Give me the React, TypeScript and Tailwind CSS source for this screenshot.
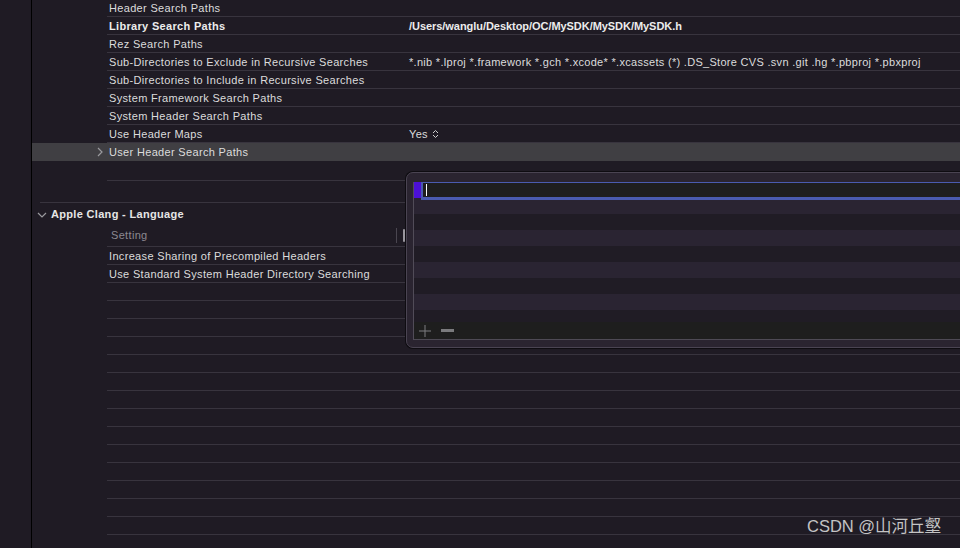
import React from "react";

const ChevronRight = () => (
  <svg width="8" height="10" viewBox="0 0 8 10" className="block">
    <path d="M2 1 L6 5 L2 9" fill="none" stroke="#9a9a9e" strokeWidth="1.2" />
  </svg>
);

const ChevronDown = () => (
  <svg width="10" height="8" viewBox="0 0 10 8" className="block">
    <path d="M1 2 L5 6 L9 2" fill="none" stroke="#9a9a9e" strokeWidth="1.2" />
  </svg>
);

const UpDown = () => (
  <svg width="7" height="10" viewBox="0 0 7 10" className="block">
    <path d="M1 4 L3.5 1.5 L6 4 M1 6 L3.5 8.5 L6 6" fill="none" stroke="#cfcfcf" strokeWidth="1" />
  </svg>
);

type RowProps = {
  label?: string;
  value?: React.ReactNode;
  bold?: boolean;
  selected?: boolean;
  noBorder?: boolean;
  h?: string;
};

const Row = ({ label, value, bold, selected, noBorder, h = "h-[18px]" }: RowProps) => (
  <div className={`flex shrink-0 ${h} ${selected ? "bg-[#403f43]" : ""}`}>
    <div className="w-[75px] shrink-0 flex items-center justify-end pr-[3px]">
      {selected ? <ChevronRight /> : null}
    </div>
    <div
      className={`flex-1 flex items-center pt-px ${noBorder ? "" : "border-b border-[#38343e]"} ${
        bold ? "font-bold text-[#ececec]" : "text-[#dcdcdc]"
      }`}
    >
      <div className={`w-[302px] shrink-0 pl-[2px] whitespace-nowrap ${bold ? "tracking-[0.32px]" : "tracking-[0.33px]"}`}>
        {label}
      </div>
      <div className={`whitespace-nowrap ${bold ? "tracking-[-0.05px]" : "tracking-[0.3px]"}`}>{value}</div>
    </div>
  </div>
);

export default function App() {
  const stripes = [
    { h: "h-[14px]", c: "bg-[#2a2432]" },
    { h: "h-[16px]", c: "bg-[#201c25]" },
    { h: "h-[16px]", c: "bg-[#2a2432]" },
    { h: "h-[16px]", c: "bg-[#201c25]" },
    { h: "h-[16px]", c: "bg-[#2a2432]" },
    { h: "h-[16px]", c: "bg-[#201c25]" },
    { h: "h-[16px]", c: "bg-[#2a2432]" },
    { h: "h-[12px]", c: "bg-[#201c25]" },
  ];
  const emptyRows = Array.from({ length: 16 });

  return (
    <div className="relative w-[960px] h-[548px] overflow-hidden bg-[#1f1b24] flex font-['Liberation_Sans',Arial,sans-serif] text-[11px] leading-none">
      <div className="w-[31px] shrink-0" />
      <div className="w-px shrink-0 bg-black" />
      <div className="flex-1 flex flex-col -mt-px">
        <Row label="Header Search Paths" />
        <Row label="Library Search Paths" value="/Users/wanglu/Desktop/OC/MySDK/MySDK/MySDK.h" bold />
        <Row label="Rez Search Paths" />
        <Row
          label="Sub-Directories to Exclude in Recursive Searches"
          value="*.nib *.lproj *.framework *.gch *.xcode* *.xcassets (*) .DS_Store CVS .svn .git .hg *.pbproj *.pbxproj"
        />
        <Row label="Sub-Directories to Include in Recursive Searches" />
        <Row label="System Framework Search Paths" />
        <Row label="System Header Search Paths" />
        <Row
          label="Use Header Maps"
          value={
            <span className="flex items-center gap-[4px]">
              Yes <UpDown />
            </span>
          }
        />
        <Row label="User Header Search Paths" selected noBorder />
        <Row h="h-[20px]" />
        <div className="h-[21px] shrink-0" />
        <div className="ml-[8px] border-t border-[#38343e] shrink-0" />
        <div className="h-[22px] shrink-0 flex items-center pl-[5px] gap-[4px] pt-px">
          <ChevronDown />
          <span className="font-bold text-[#e6e6e6] text-[11px] tracking-[0.32px]">Apple Clang - Language</span>
        </div>
        <div className="flex h-[22px] shrink-0">
          <div className="w-[75px] shrink-0" />
          <div className="flex-1 flex items-center border-b border-[#38343e]">
            <div className="w-[289px] shrink-0 pl-[4px] text-[#8c8990] tracking-[0.33px]">Setting</div>
            <div className="w-px h-[15px] bg-[#4a4650]" />
            <div className="ml-[6px] w-[2px] h-[13px] rounded-[1px] bg-[#9a979e]" />
          </div>
        </div>
        <Row label="Increase Sharing of Precompiled Headers" />
        <Row label="Use Standard System Header Directory Searching" />
        {emptyRows.map((_, i) => (
          <Row key={i} />
        ))}
      </div>

      {/* Popover editor */}
      <div className="absolute left-[406px] top-[172px] w-[600px] h-[176px] rounded-[7px] border border-[#4a4452] bg-[#2a2430] shadow-[0_0_0_1px_#0e0c11] pl-[6px] pt-[9px]">
        <div className="flex flex-col border-l border-[#514c58]">
          <div className="h-[18px] flex">
            <div className="w-[7px] h-[16px] bg-[#4c10d6] shrink-0" />
            <div className="flex-1 bg-[#1e1e1f] border-l-2 border-t border-b-[3px] border-[#4a5bb0] flex items-center pl-[3px]">
              <div className="w-px h-[12px] bg-white" />
            </div>
          </div>
          {stripes.map((s, i) => (
            <div key={i} className={`${s.h} ${s.c}`} />
          ))}
          <div className="h-[18px] bg-[#1e1e1e] border-b border-[#4e4a55] flex items-center">
            <svg width="14" height="14" viewBox="0 0 14 14" className="ml-[4px] block">
              <path d="M7 1 V13 M1 7 H13" stroke="#7d7d80" strokeWidth="1" />
            </svg>
            <div className="ml-[9px] w-[13px] h-[3px] bg-[#7a7a7d]" />
          </div>
        </div>
      </div>

      {/* Watermark */}
      <div className="absolute left-[807px] top-[518px] text-[16.5px] leading-none text-[#c4c4c4] font-['Liberation_Sans','Noto_Sans_CJK_SC',sans-serif] whitespace-nowrap">
        CSDN @山河丘壑
      </div>
    </div>
  );
}
